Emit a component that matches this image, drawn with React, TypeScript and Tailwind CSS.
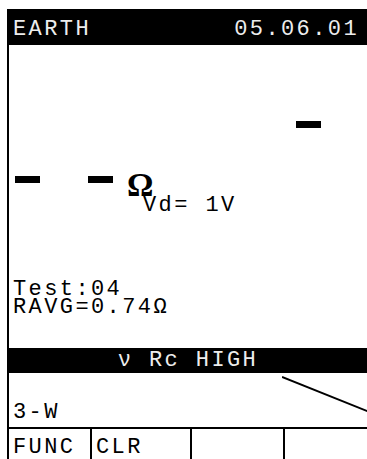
const mono = { fontFamily: '"Liberation Mono", "Courier New", monospace' };

const Dash = ({ className = '' }: { className?: string }) => (
  <div className={`h-[7px] w-[25px] bg-black ${className}`} />
);

const Cell = ({ label, className = '' }: { label?: string; className?: string }) => (
  <div className={`h-full shrink-0 pl-[4px] pt-[10px] ${className}`}>{label}</div>
);

export default function App() {
  return (
    <div
      className="h-[459px] w-[367px] overflow-hidden bg-white text-[22px] leading-[18px] tracking-[2.4px] text-black"
      style={mono}
    >
      <div className="ml-[7px] mt-[9px] flex h-[460px] flex-col border-l-2 border-black">
        {/* header */}
        <div className="flex h-[36px] shrink-0 justify-between bg-black pl-[4px] pr-[8px] pt-[12px] text-[#ededed]">
          <span>EARTH</span>
          <span>05.06.01</span>
        </div>

        {/* readout */}
        <Dash className="ml-[287px] mt-[76px] h-[6px] w-[24px]" />
        <div className="mt-[46px] flex h-[22px] items-start">
          <Dash className="ml-[6px] mt-[2px]" />
          <Dash className="ml-[48px] mt-[2px]" />
          <span
            className="ml-[14px] text-[33px] font-bold leading-[22px] tracking-normal"
            style={{ fontFamily: '"Liberation Serif", "Times New Roman", serif' }}
          >
            Ω
          </span>
        </div>
        <div className="ml-[134px] mt-[1px] whitespace-pre">Vd= 1V</div>

        <div className="mt-[66px] pl-[4px]">
          <div>Test:04</div>
          <div>RAVG=0.74Ω</div>
        </div>

        {/* status bar */}
        <div className="mt-[31px] flex h-[25px] shrink-0 items-center justify-center bg-black pt-[1px] text-[#ededed]">
          <span className="whitespace-pre">ν Rc HIGH</span>
        </div>

        <div className="relative h-[54px] shrink-0 pl-[4px] pt-[31px]">
          3-W
          <svg className="absolute left-[273px] top-[3px]" width="100" height="42" viewBox="0 0 100 42">
            <line x1="0" y1="1" x2="100" y2="41" stroke="black" strokeWidth="2" />
          </svg>
        </div>

        {/* soft keys */}
        <div className="flex h-[40px] shrink-0 border-t-2 border-black">
          <Cell label="FUNC" className="w-[81px]" />
          <Cell label="CLR" className="w-[100px] border-l-2 border-black" />
          <Cell className="w-[93px] border-l-2 border-black" />
          <Cell className="w-[90px] border-l-2 border-black" />
        </div>
      </div>
    </div>
  );
}
